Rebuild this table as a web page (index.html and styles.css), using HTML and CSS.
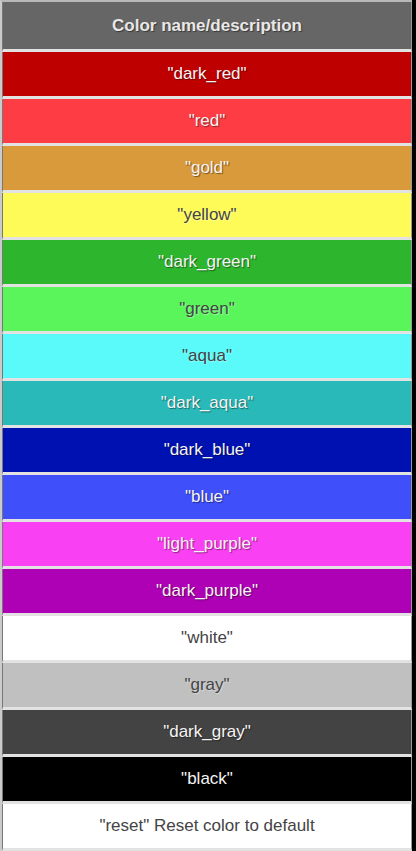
FILE: index.html
```html
<!DOCTYPE html>
<html lang="en">
<head>
    <meta charset="UTF-8">
    <meta name="viewport" content="width=device-width, initial-scale=1.0">
    <title>Color codes</title>
    <link rel="stylesheet" href="styles.css">
</head>
<body>
    <table class="color-table">
        <thead>
            <tr>
                <th>Color name/description</th>
            </tr>
        </thead>
        <tbody>
            <tr><td class="dark-red">"dark_red"</td></tr>
            <tr><td class="red">"red"</td></tr>
            <tr><td class="gold">"gold"</td></tr>
            <tr><td class="yellow light">"yellow"</td></tr>
            <tr><td class="dark-green">"dark_green"</td></tr>
            <tr><td class="green light">"green"</td></tr>
            <tr><td class="aqua light">"aqua"</td></tr>
            <tr><td class="dark-aqua">"dark_aqua"</td></tr>
            <tr><td class="dark-blue">"dark_blue"</td></tr>
            <tr><td class="blue">"blue"</td></tr>
            <tr><td class="light-purple">"light_purple"</td></tr>
            <tr><td class="dark-purple">"dark_purple"</td></tr>
            <tr><td class="white light">"white"</td></tr>
            <tr><td class="gray light">"gray"</td></tr>
            <tr><td class="dark-gray">"dark_gray"</td></tr>
            <tr><td class="black">"black"</td></tr>
            <tr><td class="reset light">"reset" Reset color to default</td></tr>
        </tbody>
    </table>
</body>
</html>
```

FILE: styles.css
```css
body {
    margin: 0;
    background-color: #000;
    font-family: "Liberation Sans", Arial, sans-serif;
}
.color-table {
    width: 412px;
    border-collapse: separate;
    border-spacing: 0;
    border-top: 2px solid #b8b8b8;
    border-left: 2px solid #cbcbcb;
    background-color: #ddd;
}
.color-table th,
.color-table td {
    height: 44px;
    padding: 0;
    text-align: center;
    vertical-align: middle;
    font-size: 17px;
    color: #f4f4f4;
    text-shadow: 1px 1px 1px rgba(0, 0, 0, 0.45);
    border-left: 1px solid #777;
    border-right: 1px solid #999;
    border-bottom: 3px solid #e2e2e2;
}
.color-table th {
    height: 47px;
    background-color: #666;
    color: #e8e8e8;
    font-weight: bold;
}
.color-table td.light {
    color: #444;
    text-shadow: 1px 1px 1px rgba(255, 255, 255, 0.4);
}
.dark-red { background-color: #bf0000; }
.red { background-color: #fd3c44; }
.gold { background-color: #d99a3b; }
.yellow { background-color: #fefa58; }
.dark-green { background-color: #2eb52e; }
.green { background-color: #5af55a; }
.aqua { background-color: #5afafa; }
.dark-aqua { background-color: #2ab9b9; }
.dark-blue { background-color: #0011b2; }
.blue { background-color: #3f4ffa; }
.light-purple { background-color: #f940f2; }
.dark-purple { background-color: #ae00b4; }
.white { background-color: #fff; }
.gray { background-color: #c0c0c0; }
.dark-gray { background-color: #434343; }
.black { background-color: #000; }
.reset { background-color: #fff; }
```
